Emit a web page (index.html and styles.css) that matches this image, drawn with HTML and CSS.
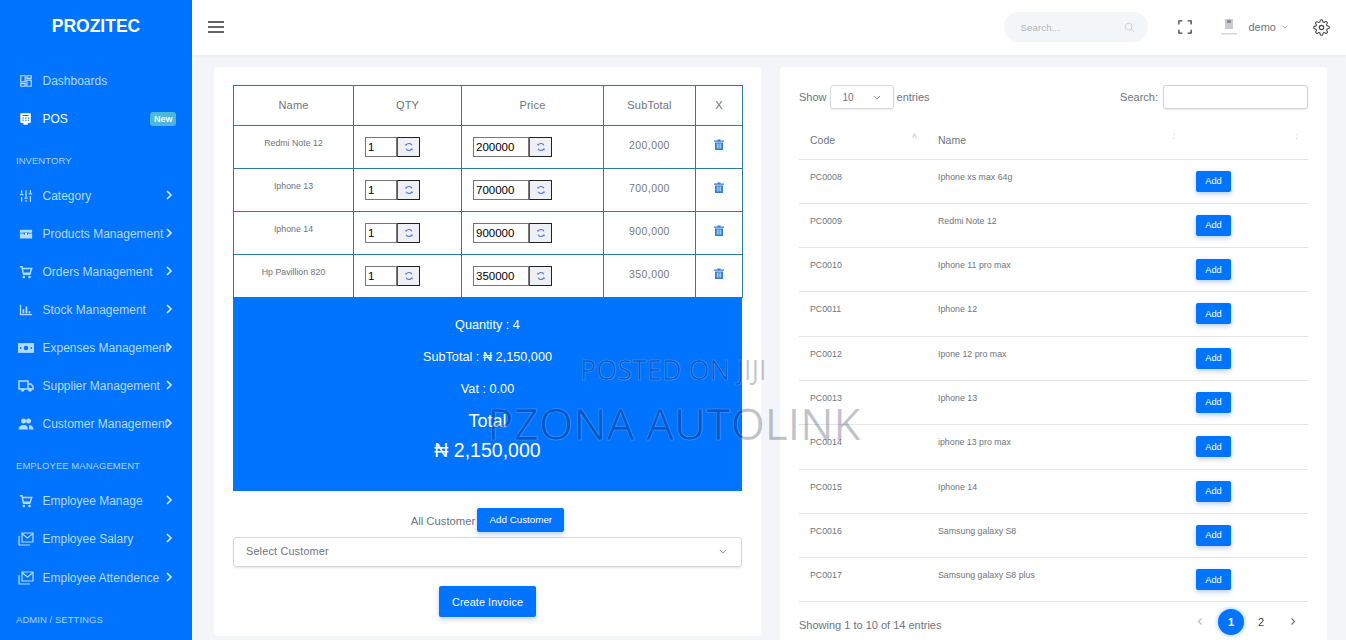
FILE: index.html
```html
<!DOCTYPE html>
<html lang="en">
<head>
<meta charset="utf-8">
<title>Prozitec POS</title>
<link rel="stylesheet" href="styles.css">
</head>
<body>
<svg class="defs" aria-hidden="true">
  <symbol id="i-chev" viewBox="0 0 8 12"><path d="M2 2l4 4-4 4" fill="none" stroke="currentColor" stroke-width="1.6"/></symbol>
  <symbol id="i-dash" viewBox="0 0 16 16"><path d="M2 2h5v7H2zM9 2h5v3H9zM9 7h5v7H9zM2 11h5v3H2z" fill="none" stroke="currentColor" stroke-width="1.4"/></symbol>
  <symbol id="i-pos" viewBox="0 0 16 16"><path d="M2 1.500h10.500a1 1 0 0 1 1 1v9a1 1 0 0 1-1 1H10v2H5v-2H2.500a1 1 0 0 1-1-1v-9a1 1 0 0 1 .5-1z" fill="currentColor"/><path d="M4 4h7M4 7h1.500M7 7h1.500M10 7h1.500M4 9.500h1.500M7 9.500h1.500M10 9.500h1.500" stroke="#0073ff" stroke-width="1.200"/></symbol>
  <symbol id="i-sliders" viewBox="0 0 16 16"><path d="M3 1.500v4M3 9v5.500M8 1.500v8M8 12.500v2M13 1.500v3M13 8v6.500M1 6.500h4M6 10.500h4M11 5.500h4" fill="none" stroke="currentColor" stroke-width="1.500"/></symbol>
  <symbol id="i-box" viewBox="0 0 16 16"><path d="M1 3h14v3.500H1zM1 7.500h14V13H1z" fill="currentColor"/><path d="M5 6.500a3 2.500 0 0 0 6 0z" fill="#0073ff"/><circle cx="8" cy="8" r="1.300" fill="#fff"/></symbol>
  <symbol id="i-cart" viewBox="0 0 16 16"><path d="M1 2h2.500l1.300 7.500h8L14.500 4H4" fill="none" stroke="currentColor" stroke-width="1.700"/><path d="M4.500 9.500h8.500v2H4.500z" fill="currentColor"/><circle cx="5.500" cy="13.700" r="1.500" fill="currentColor"/><circle cx="12" cy="13.700" r="1.500" fill="currentColor"/></symbol>
  <symbol id="i-chart" viewBox="0 0 16 16"><path d="M1 14V2h1.500v10.500H15V14z" fill="currentColor"/><path d="M4 7h2v5H4zM7.500 4h2v8h-2zM11 9h2v3h-2z" fill="currentColor"/></symbol>
  <symbol id="i-money" viewBox="0 0 18 12"><path d="M0 .5h18v11H0z" fill="currentColor"/><circle cx="9" cy="6" r="2.500" fill="#0073ff"/><circle cx="3" cy="6" r="1" fill="#0073ff"/><circle cx="15" cy="6" r="1" fill="#0073ff"/></symbol>
  <symbol id="i-truck" viewBox="0 0 16 14"><path d="M1 2h9v8H1zM10 5h3l2 2.500V10h-5z" fill="none" stroke="currentColor" stroke-width="1.500"/><circle cx="4.500" cy="11" r="1.800" fill="currentColor"/><circle cx="12" cy="11" r="1.800" fill="currentColor"/></symbol>
  <symbol id="i-users" viewBox="0 0 16 14"><circle cx="5.500" cy="4" r="2.500" fill="currentColor"/><circle cx="10.500" cy="4" r="2.500" fill="currentColor"/><path d="M.5 12.500c0-3 2-4.500 5-4.500s4 1 4.500 4.500zM11 8c2.500 0 4.500 1.500 4.500 4.500H11z" fill="currentColor"/></symbol>
  <symbol id="i-mail" viewBox="0 0 16 14"><path d="M4 1h11v9H4zM4.500 2l5 4 5-4M1 4v9h11" fill="none" stroke="currentColor" stroke-width="1.200"/></symbol>
  <symbol id="i-trash" viewBox="0 0 12 12"><path d="M1 2h3.500V1h3v1H11v1.300H1zM2 4h8v7.500H2z" fill="currentColor"/><path d="M4.300 5v5M6 5v5M7.700 5v5" stroke="#fff" stroke-width=".7"/></symbol>
  <symbol id="i-sync" viewBox="0 0 12 12"><path d="M9.500 4A4 4 0 0 0 2.700 3.500M2.500 8a4 4 0 0 0 6.800.5" fill="none" stroke="#4f72d8" stroke-width="1.300"/><path d="M3.800 4.200H1.600V1.800zM8.200 7.800h2.200v2.400z" fill="#4f72d8"/></symbol>
  <symbol id="i-down" viewBox="0 0 10 6"><path d="M1 1l4 4 4-4" fill="none" stroke="currentColor" stroke-width="1"/></symbol>
</svg>

<div class="app">
  <aside class="sidebar">
    <div class="logo">PROZITEC</div>
    <nav class="nav">
      <a class="item"><svg class="ic"><use href="#i-dash"/></svg><span>Dashboards</span></a>
      <a class="item active"><svg class="ic"><use href="#i-pos"/></svg><span>POS</span><b class="badge">New</b></a>
      <div class="label">INVENTORY</div>
      <a class="item"><svg class="ic"><use href="#i-sliders"/></svg><span>Category</span><svg class="chev"><use href="#i-chev"/></svg></a>
      <a class="item"><svg class="ic"><use href="#i-box"/></svg><span>Products Management</span><svg class="chev"><use href="#i-chev"/></svg></a>
      <a class="item"><svg class="ic"><use href="#i-cart"/></svg><span>Orders Management</span><svg class="chev"><use href="#i-chev"/></svg></a>
      <a class="item"><svg class="ic"><use href="#i-chart"/></svg><span>Stock Management</span><svg class="chev"><use href="#i-chev"/></svg></a>
      <a class="item"><svg class="ic"><use href="#i-money"/></svg><span>Expenses Management</span><svg class="chev"><use href="#i-chev"/></svg></a>
      <a class="item"><svg class="ic"><use href="#i-truck"/></svg><span>Supplier Management</span><svg class="chev"><use href="#i-chev"/></svg></a>
      <a class="item"><svg class="ic"><use href="#i-users"/></svg><span>Customer Management</span><svg class="chev"><use href="#i-chev"/></svg></a>
      <div class="label">EMPLOYEE MANAGEMENT</div>
      <a class="item"><svg class="ic"><use href="#i-cart"/></svg><span>Employee Manage</span><svg class="chev"><use href="#i-chev"/></svg></a>
      <a class="item"><svg class="ic"><use href="#i-mail"/></svg><span>Employee Salary</span><svg class="chev"><use href="#i-chev"/></svg></a>
      <a class="item"><svg class="ic"><use href="#i-mail"/></svg><span>Employee Attendence</span><svg class="chev"><use href="#i-chev"/></svg></a>
      <div class="label">ADMIN / SETTINGS</div>
    </nav>
  </aside>

  <div class="content">
    <header class="topbar">
      <svg class="burger" viewBox="0 0 16 12"><path d="M0 1h16M0 6h16M0 11h16" stroke="#333" stroke-width="1.600"/></svg>
      <div class="top-right">
        <div class="pill"><span>Search...</span>
          <svg class="pill-ic" viewBox="0 0 12 12"><circle cx="5" cy="5" r="3.800" fill="none" stroke="#c8ccd0"/><path d="M8 8l3 3" stroke="#c8ccd0"/></svg>
        </div>
        <svg class="full" viewBox="0 0 16 16"><path d="M1 5V1h4M11 1h4v4M15 11v4h-4M5 15H1v-4" fill="none" stroke="#444" stroke-width="1.500"/></svg>
        <svg class="avatar" viewBox="0 0 20 20"><path d="M6 2h8v10H6z" fill="#c9ccd0"/><path d="M8 3h4v3H8z" fill="#8d9196"/><path d="M2 16h16v1.500H2z" fill="#d5d7da"/></svg>
        <span class="user">demo</span>
        <svg class="user-ch"><use href="#i-down"/></svg>
        <svg class="gear" viewBox="0 0 24 24"><circle cx="12" cy="12" r="3" fill="none" stroke="#444" stroke-width="1.700"/><path d="M19.400 15a1.650 1.650 0 0 0 .33 1.820l.06.06a2 2 0 1 1-2.830 2.830l-.06-.06a1.650 1.650 0 0 0-2.800 1.170V21a2 2 0 1 1-4 0v-.09A1.650 1.650 0 0 0 7.300 19.700l-.06.06a2 2 0 1 1-2.830-2.830l.06-.06a1.650 1.650 0 0 0-1.170-2.800H3a2 2 0 1 1 0-4h.09A1.650 1.650 0 0 0 4.300 7.300l-.06-.06a2 2 0 1 1 2.830-2.830l.06.06A1.650 1.650 0 0 0 9.900 3.300V3a2 2 0 1 1 4 0v.09a1.650 1.650 0 0 0 2.800 1.170l.06-.06a2 2 0 1 1 2.830 2.830l-.06.06a1.650 1.650 0 0 0 1.170 2.800H21a2 2 0 1 1 0 4h-.09a1.650 1.650 0 0 0-1.510 1.110z" fill="none" stroke="#444" stroke-width="1.500"/></svg>
      </div>
    </header>

    <main class="main">
      <section class="card pos">
        <table class="cart">
          <colgroup><col class="c1"><col class="c2"><col class="c3"><col class="c4"><col class="c5"></colgroup>
          <thead><tr><th>Name</th><th>QTY</th><th>Price</th><th>SubTotal</th><th>X</th></tr></thead>
          <tbody>
            <tr>
              <td class="pname">Redmi Note 12</td>
              <td><div class="spin"><input class="num qty" value="1"><button class="sync"><svg><use href="#i-sync"/></svg></button></div></td>
              <td><div class="spin"><input class="num price" value="200000"><button class="sync"><svg><use href="#i-sync"/></svg></button></div></td>
              <td class="sub">200,000</td>
              <td class="del"><svg><use href="#i-trash"/></svg></td>
            </tr>
            <tr>
              <td class="pname">Iphone 13</td>
              <td><div class="spin"><input class="num qty" value="1"><button class="sync"><svg><use href="#i-sync"/></svg></button></div></td>
              <td><div class="spin"><input class="num price" value="700000"><button class="sync"><svg><use href="#i-sync"/></svg></button></div></td>
              <td class="sub">700,000</td>
              <td class="del"><svg><use href="#i-trash"/></svg></td>
            </tr>
            <tr>
              <td class="pname">Iphone 14</td>
              <td><div class="spin"><input class="num qty" value="1"><button class="sync"><svg><use href="#i-sync"/></svg></button></div></td>
              <td><div class="spin"><input class="num price" value="900000"><button class="sync"><svg><use href="#i-sync"/></svg></button></div></td>
              <td class="sub">900,000</td>
              <td class="del"><svg><use href="#i-trash"/></svg></td>
            </tr>
            <tr>
              <td class="pname">Hp Pavillion 820</td>
              <td><div class="spin"><input class="num qty" value="1"><button class="sync"><svg><use href="#i-sync"/></svg></button></div></td>
              <td><div class="spin"><input class="num price" value="350000"><button class="sync"><svg><use href="#i-sync"/></svg></button></div></td>
              <td class="sub">350,000</td>
              <td class="del"><svg><use href="#i-trash"/></svg></td>
            </tr>
          </tbody>
        </table>
        <div class="totals">
          <div class="t-line">Quantity : 4</div>
          <div class="t-line">SubTotal : ₦ 2,150,000</div>
          <div class="t-line">Vat : 0.00</div>
          <div class="t-total">Total</div>
          <div class="t-grand">₦ 2,150,000</div>
        </div>
        <div class="cust-row"><span>All Customer</span><button class="btn btn-add">Add Customer</button></div>
        <div class="select"><span>Select Customer</span><svg class="sel-ch"><use href="#i-down"/></svg></div>
        <div class="invoice-row"><button class="btn btn-invoice">Create Invoice</button></div>
      </section>

      <section class="card list">
        <div class="tools">
          <div class="tool">Show <div class="len"><span>10</span><svg class="sel-ch"><use href="#i-down"/></svg></div> entries</div>
          <div class="tool">Search: <div class="dt-search"></div></div>
        </div>
        <table class="products">
          <colgroup><col class="p1"><col class="p2"><col class="p3"></colgroup>
          <thead><tr><th>Code<i class="sort">˄</i></th><th>Name<i class="sort">:</i></th><th><i class="sort">:</i></th></tr></thead>
          <tbody>
            <tr><td>PC0008</td><td>Iphone xs max 64g</td><td><button class="btn btn-sm">Add</button></td></tr>
            <tr><td>PC0009</td><td>Redmi Note 12</td><td><button class="btn btn-sm">Add</button></td></tr>
            <tr><td>PC0010</td><td>Iphone 11 pro max</td><td><button class="btn btn-sm">Add</button></td></tr>
            <tr><td>PC0011</td><td>Iphone 12</td><td><button class="btn btn-sm">Add</button></td></tr>
            <tr><td>PC0012</td><td>Ipone 12 pro max</td><td><button class="btn btn-sm">Add</button></td></tr>
            <tr><td>PC0013</td><td>Iphone 13</td><td><button class="btn btn-sm">Add</button></td></tr>
            <tr><td>PC0014</td><td>iphone 13 pro max</td><td><button class="btn btn-sm">Add</button></td></tr>
            <tr><td>PC0015</td><td>Iphone 14</td><td><button class="btn btn-sm">Add</button></td></tr>
            <tr><td>PC0016</td><td>Samsung galaxy S8</td><td><button class="btn btn-sm">Add</button></td></tr>
            <tr><td>PC0017</td><td>Samsung galaxy S8 plus</td><td><button class="btn btn-sm">Add</button></td></tr>
          </tbody>
        </table>
        <div class="foot">
          <span>Showing 1 to 10 of 14 entries</span>
          <div class="pager">
            <svg class="pg-arrow prev"><use href="#i-chev"/></svg>
            <span class="pg cur">1</span>
            <span class="pg">2</span>
            <svg class="pg-arrow"><use href="#i-chev"/></svg>
          </div>
        </div>
      </section>
    </main>
  </div>
</div>

<div class="wm wm-a">POSTED ON JIJI</div>
<div class="wm wm-b">PZONA AUTOLINK</div>
</body>
</html>
```
FILE: styles.css
```css
* { box-sizing: border-box; }
html, body { margin: 0; height: 640px; overflow: hidden; }
body { position: relative; font-family: "Liberation Sans", Arial, sans-serif; color: #6c757d; background: #f3f5f8; }
.defs { display: none; }
button { font-family: inherit; }

.app { display: flex; height: 640px; }

/* sidebar */
.sidebar { flex: 0 0 192px; background: #0073ff; color: #b4dbff; overflow: hidden; }
.logo { height: 54px; line-height: 53px; text-align: center; color: #fff; font-weight: 700; font-size: 17.5px; }
.nav { display: flex; flex-direction: column; padding-top: 7.500px; }
.item { display: grid; grid-template-columns: 16px 1fr 6px; align-items: center; column-gap: 9px; height: 38.1px; padding: 0 20px 0 18px; font-size: 12px; white-space: nowrap; }
.item span { min-width: 0; margin-left: -.5px; }
.item.active { color: #fff; }
.ic { width: 16px; height: 14px; color: #b4dbff; }
.active .ic { color: #fff; }
.chev { width: 8px; height: 12px; color: #d3eaff; margin-left: -1px; transform: translateY(-1px); }
.badge { justify-self: end; margin-right: -4px; background: #4cb8dc; color: #eafcff; font-size: 9px; line-height: 14px; padding: 0 4px; border-radius: 3px; font-weight: 700; grid-column: 3; grid-row: 1; width: 26px; text-align: center; }
.label { height: 38px; padding: 7px 0 0 16px; display: flex; align-items: center; font-size: 9.5px; color: #a6d3ff; letter-spacing: .05px; }
.label + .item { margin-top: 1px; }

/* top */
.content { flex: 1; min-width: 0; display: flex; flex-direction: column; }
.topbar { height: 55px; flex: none; background: #fff; display: flex; align-items: center; justify-content: space-between; padding: 0 16px 1px; box-shadow: 0 1px 4px rgba(0,0,0,.06); position: relative; }
.burger { width: 16px; height: 12px; }
.top-right { display: flex; align-items: center; }
.pill { width: 144px; height: 30px; border-radius: 15px; background: #f3f6f9; display: flex; align-items: center; justify-content: space-between; padding: 0 13px 0 16px; font-size: 9.5px; color: #b0b5ba; letter-spacing: .2px; }
.pill-ic { width: 11px; height: 11px; }
.full { width: 14px; height: 14px; margin-left: 30px; }
.avatar { width: 20px; height: 20px; margin-left: 27px; }
.user { margin-left: 9px; font-size: 11px; color: #6c757d; }
.user-ch { width: 6px; height: 4px; margin-left: 6px; color: #6c757d; }
.gear { width: 17px; height: 17px; margin-left: 25px; }

/* cards */
.main { flex: 1; min-height: 0; display: grid; grid-template-columns: 547px 547px; column-gap: 19px; padding: 12px 0 0 22px; overflow: hidden; align-items: start; }
.card { background: #fff; border-radius: 4px; padding: 18px 19px; }
.pos { height: 569px; }
.list { height: 600px; }

/* cart */
.cart { width: 509px; border-collapse: collapse; table-layout: fixed; }
.c1 { width: 120px; } .c2 { width: 108px; } .c3 { width: 142px; } .c4 { width: 92px; } .c5 { width: 47px; }
.cart th, .cart td { border: 1px solid #2a7ca8; text-align: center; padding: 0; }
.cart th { height: 40px; padding-bottom: 2px; font-size: 11px; font-weight: 400; color: #6c757d; letter-spacing: .2px; }
.cart td { height: 43px; }
.cart .pname { font-size: 8.8px; vertical-align: top; padding-top: 12px; color: #6c757d; }
.sub { font-size: 10.500px; letter-spacing: .4px; color: #75797d; padding-bottom: 4px !important; }
.del svg { width: 12px; height: 13px; color: #2e7dd6; display: block; margin: 0 auto 5px; }
.spin { display: flex; height: 20px; margin: 0 0 1px 11px; }
.num { height: 20px; border: 1px solid #767676; background: #fff; padding: 0 2px; font: 11.500px "Liberation Sans", Arial, sans-serif; color: #000; outline: none; border-radius: 0; }
.qty { width: 32px; }
.price { width: 56px; }
.sync { width: 23px; height: 20px; padding: 0; background: #eef0f5; border: 1px solid #222; border-left-color: #555; display: flex; align-items: center; justify-content: center; }
.sync svg { width: 10px; height: 12px; }

/* totals */
.totals { height: 194px; margin-top: -1px; background: #0073ff; color: #fff; display: flex; flex-direction: column; align-items: center; padding-top: 12px; position: relative; }
.t-line { height: 32px; line-height: 32px; font-size: 12.700px; }
.t-total { height: 32px; line-height: 32px; font-size: 18px; }
.t-grand { height: 26px; line-height: 26px; font-size: 19.500px; }

/* form */
.cust-row { display: flex; justify-content: center; align-items: flex-end; gap: 2px; margin-top: 17px; font-size: 11.300px; }
.cust-row span { padding-bottom: 5px; }
.btn { border: 0; background: #0073ff; color: #fff; border-radius: 2px; box-shadow: 0 2px 5px rgba(0,90,220,.3); padding: 0; display: block; }
.btn-add { width: 87px; height: 24px; font-size: 9.800px; padding-bottom: 2px; }
.select { height: 30px; margin-top: 5px; border: 1px solid #d3d6da; border-radius: 3px; box-shadow: 0 1px 2px rgba(0,0,0,.1); display: flex; align-items: center; justify-content: space-between; padding: 0 14px 2px 12px; font-size: 10.800px; letter-spacing: .2px; }
.sel-ch { width: 8px; height: 5px; color: #777; }
.invoice-row { display: flex; justify-content: center; margin-top: 19px; }
.btn-invoice { width: 97px; height: 31px; font-size: 10.800px; letter-spacing: .1px; }

/* right */
.tools { display: flex; justify-content: space-between; height: 24px; }
.tool { display: flex; align-items: center; gap: 3px; font-size: 11px; }
.len { width: 64px; height: 24px; border: 1px solid #d5d8dc; border-radius: 3px; box-shadow: 0 1px 2px rgba(0,0,0,.08); display: flex; align-items: center; justify-content: space-between; padding: 0 12px; font-size: 10px; }
.dt-search { width: 145px; height: 24px; border: 1px solid #cfd3d7; border-radius: 3px; box-shadow: 0 1px 2px rgba(0,0,0,.1); margin-left: 2px; }
.products { width: 509px; margin-top: 12px; border-collapse: collapse; table-layout: fixed; }
.p1 { width: 128px; } .p2 { width: 258px; } .p3 { width: 123px; }
.products th { position: relative; height: 38px; border-bottom: 1px solid #e3e5e8; text-align: left; padding: 0 0 0 11px; font-weight: 400; font-size: 10.500px; color: #6c757d; }
.products td { height: 44.300px; border-bottom: 1px solid #e3e5e8; padding: 12px 0 0 11px; vertical-align: top; font-size: 8.800px; color: #6c757d; }
.sort { position: absolute; right: 10px; top: 10px; font-style: normal; font-size: 9px; color: #bbb; }
.btn-sm { width: 35px; height: 21px; margin-top: -1px; font-size: 9.300px; }
.foot { display: flex; justify-content: space-between; align-items: center; height: 43px; padding: 2px 0 0; font-size: 11px; }
.pager { display: flex; align-items: center; margin: -6px 12px 0 0; }
.pg { width: 26px; height: 26px; line-height: 26px; text-align: center; margin-left: 4px; border-radius: 50%; font-size: 11px; color: #444; }
.pg.cur { background: #0073ff; color: #fff; box-shadow: 0 0 4px rgba(0,115,255,.5); font-weight: 700; margin-left: 15px; }
.pg-arrow { width: 6px; height: 9px; color: #777; margin-left: 16px; }
.pg-arrow.prev { color: #bbb; transform: scaleX(-1); margin-left: 0; }

/* watermark */
.wm { position: absolute; font-family: "Open Sans", sans-serif; white-space: nowrap; color: rgba(0,10,50,.25); -webkit-text-stroke: .6px rgba(255,255,255,.32); line-height: 1; }
.wm-a { left: 580px; top: 356px; font-size: 27px; }
.wm-b { left: 487px; top: 401px; font-size: 44.200px; }
```
